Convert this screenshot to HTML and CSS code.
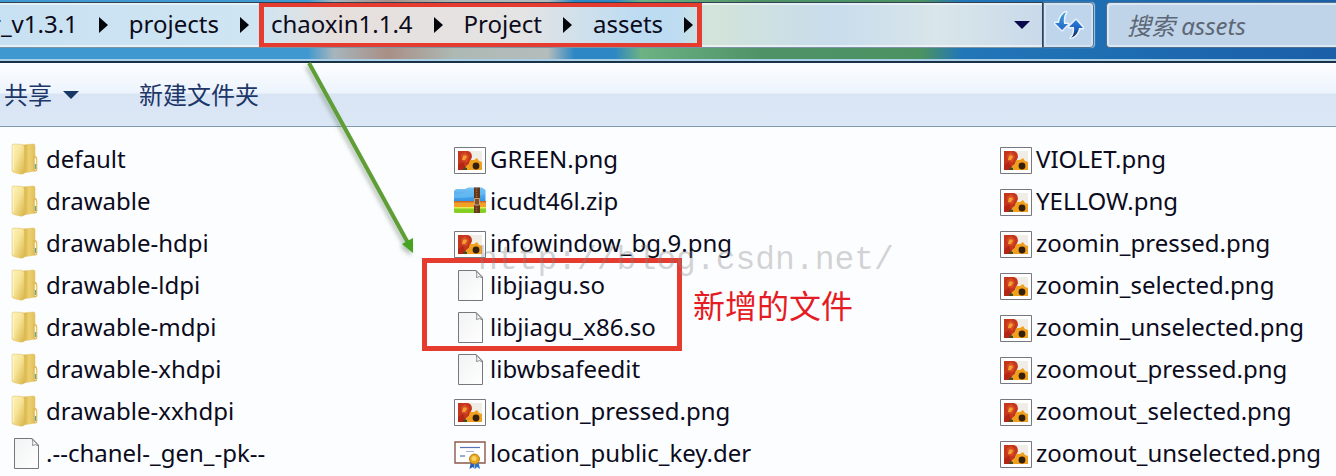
FILE: index.html
```html
<!DOCTYPE html>
<html lang="zh-CN">
<head>
<meta charset="utf-8">
<title>assets</title>
<link rel="stylesheet" href="styles.css">
</head>
<body>
<svg class="symbols" aria-hidden="true">
  <defs>
    <linearGradient id="foldL" x1="0" y1="0" x2="1" y2="1"><stop offset="0" stop-color="#fdf3bd"/><stop offset=".45" stop-color="#f6e497"/><stop offset="1" stop-color="#d9b447"/></linearGradient>
    <linearGradient id="foldR" x1="0" y1="0" x2="1" y2="0"><stop offset="0" stop-color="#d2ab3c"/><stop offset=".5" stop-color="#ecd070"/><stop offset="1" stop-color="#e3c05a"/></linearGradient>
    <linearGradient id="paper" x1="0" y1="0" x2="1" y2="1"><stop offset="0" stop-color="#f1f2f3"/><stop offset="1" stop-color="#ffffff"/></linearGradient>
    <linearGradient id="zipBlue" x1="0" y1="0" x2="0" y2="1"><stop offset="0" stop-color="#7cc6f6"/><stop offset="1" stop-color="#2a8de0"/></linearGradient>
    <linearGradient id="arrowLeft" x1="0" y1="0" x2="0" y2="1"><stop offset="0" stop-color="#3f9fd8"/><stop offset="1" stop-color="#2468c8"/></linearGradient>
    <linearGradient id="arrowRight" x1="0" y1="0" x2="0" y2="1"><stop offset="0" stop-color="#2b80dc"/><stop offset=".5" stop-color="#1f5fc0"/><stop offset="1" stop-color="#0a1840"/></linearGradient>
    <symbol id="folder" viewBox="0 0 32 32">
      <path d="M13 2 L23.500 1 Q25 1 25 3 V28 L13 30Z" fill="url(#foldR)" stroke="#dcbc5c" stroke-width=".5"/>
      <path d="M24 13 Q27 13 27 16 V27 Q27 28.500 24 28Z" fill="#e6c45c" stroke="#d0aa44" stroke-width=".5"/>
      <path d="M24.800 15 q1.400 0 1.400 2 v9 q-.6 1-1.400 1z" fill="#fffbe6"/>
      <path d="M24.800 21 h1.400 v5 h-1.400z" fill="#6fa08a"/>
      <path d="M2 2.500 Q2 1 4 1 L12 1.400 Q14.500 2 14.500 4.500 V30 Q13 31.500 10 31 L4 29.500 Q2 29 2 27.500Z" fill="url(#foldL)" stroke="#dcbc5c" stroke-width=".5"/>
      <path d="M3.300 3 V27" stroke="#fff9d8" stroke-width=".8"/>
    </symbol>
    <symbol id="file" viewBox="0 0 32 32">
      <path d="M4.500 1.500 H22 L28.500 8 V31.500 H4.500Z" fill="url(#paper)" stroke="#77777c"/>
      <path d="M22 1.500 Q23.500 5 22.500 8.500 Q25.500 6.500 28.500 9Z" fill="#fff" stroke="#808087" stroke-width=".9"/>
    </symbol>
    <symbol id="image" viewBox="0 0 32 32">
      <path d="M.5 4.500 H31.500 V30.500 H.5Z" fill="#fff" stroke="#77777f"/>
      <path d="M4 8 H28 V27 H4Z" fill="#efede6"/>
      <path d="M4 8 H14 Q18 9 18 14 L15 21 L9 27 H4Z" fill="#c5371d"/>
      <path d="M7 12 L11 9 L15 13 L13 19 L8 18Z" fill="#d94d22"/>
      <path d="M9 13 q3-2 4 1 l-2 3 h-3z" fill="#f2a035"/>
      <path d="M4 22 l5-3 3 8H4Z" fill="#b32515"/>
      <path d="M12 23 l3-2 1-4 4 0 3-2 2 3 3 1 V27 H12Z" fill="#f0a01c"/>
      <path d="M10 24 l3 1 v2 H9Z" fill="#3f5020"/>
      <circle cx="22" cy="23" r="3.400" fill="#35200c"/>
    </symbol>
    <symbol id="zip" viewBox="0 0 32 32">
      <path d="M0 6 Q1 4 3 4 H11 L14 2.500 H28 L31.500 5 V18 H0Z" fill="url(#zipBlue)"/>
      <path d="M0 9 Q10 10 18 4 H29 L31 7 V9 Q20 13 0 13Z" fill="#68bdf5" opacity=".7"/>
      <path d="M0 16 H32 V22 H0Z" fill="#f3a126"/><path d="M0 16 H32 V17.500 H0Z" fill="#c9682a"/>
      <path d="M0 22 H32 V27 Q32 28 30 28 H2 Q0 28 0 27Z" fill="#86cf22"/><path d="M0 22 H32 V23.500 H0Z" fill="#e5ec54"/>
      <path d="M20 2.500 H26 V28 H20Z" fill="#643719"/>
      <path d="M22.500 3 V13 M22.500 20 V28" stroke="#8d633f" stroke-width="1.400" stroke-dasharray="1.500 1"/>
      <path d="M20.500 13.500 H25.500 V20 H20.500Z" fill="#80502d" stroke="#c8a47c"/>
    </symbol>
    <symbol id="cert" viewBox="0 0 32 32">
      <path d="M1 5 H31 V26 H1Z" fill="#fff" stroke="#8c5a4d" stroke-width="1.400"/>
      <path d="M6 10.500 H26" stroke="#5671b5" stroke-width="1.200"/><path d="M12 14.500 H20" stroke="#a3b1d8"/><path d="M6 19 H11" stroke="#5671b5" stroke-width="1.200"/>
      <path d="M17 24 L15.500 32 L19 30 L20.500 32 V25Z" fill="#235fb5"/><path d="M21 25 V32 L23 30 L26 32 L24 23Z" fill="#2d73ca"/>
      <circle cx="20.500" cy="22" r="5" fill="#e6a61b" stroke="#bd8217"/><circle cx="20" cy="21.500" r="2.500" fill="#f7d066"/>
    </symbol>
  </defs>
</svg>

<div class="window">
  <header class="navbar">
    <nav class="address" aria-label="路径">
      <a class="crumb first" href="#">r_v1.3.1</a><i class="sep"></i>
      <a class="crumb" href="#">projects</a><i class="sep"></i>
      <span class="marked">
        <a class="crumb" href="#">chaoxin1.1.4</a><i class="sep"></i>
        <a class="crumb" href="#">Project</a><i class="sep"></i>
        <a class="crumb" href="#">assets</a><i class="sep"></i>
      </span>
      <button class="history" aria-label="历史"><i class="down"></i></button>
    </nav>
    <button class="refresh" aria-label="刷新">
      <svg viewBox="0 0 30 28" width="30" height="28">
        <g stroke="#e8f3fd" stroke-width="3" stroke-linejoin="round"><path d="M12 1 Q6 4 5 12 H1 L8 19 L14 13 H10 Q9 6 12 1Z"/><path d="M17 27 Q24 24 25 17 H29 L22 9 L15 16 H20 Q21 23 17 27Z"/></g>
        <path d="M12 1 Q6 4 5 12 H1 L8 19 L14 13 H10 Q9 6 12 1Z" fill="url(#arrowLeft)"/>
        <path d="M17 27 Q24 24 25 17 H29 L22 9 L15 16 H20 Q21 23 17 27Z" fill="url(#arrowRight)"/>
      </svg>
    </button>
    <input class="search" type="search" placeholder="搜索 assets" aria-label="搜索 assets">
  </header>

  <div class="toolbar">
    <button class="tool">共享<i class="down"></i></button>
    <button class="tool">新建文件夹</button>
  </div>

  <main class="files">
    <ul class="column">
      <li><svg><use href="#folder"/></svg>default</li>
      <li><svg><use href="#folder"/></svg>drawable</li>
      <li><svg><use href="#folder"/></svg>drawable-hdpi</li>
      <li><svg><use href="#folder"/></svg>drawable-ldpi</li>
      <li><svg><use href="#folder"/></svg>drawable-mdpi</li>
      <li><svg><use href="#folder"/></svg>drawable-xhdpi</li>
      <li><svg><use href="#folder"/></svg>drawable-xxhdpi</li>
      <li><svg><use href="#file"/></svg>.--chanel-_gen_-pk--</li>
    </ul>
    <ul class="column">
      <li><svg><use href="#image"/></svg>GREEN.png</li>
      <li><svg><use href="#zip"/></svg>icudt46l.zip</li>
      <li><svg><use href="#image"/></svg>infowindow_bg.9.png</li>
      <li><svg><use href="#file"/></svg>libjiagu.so</li>
      <li><svg><use href="#file"/></svg>libjiagu_x86.so</li>
      <li><svg><use href="#file"/></svg>libwbsafeedit</li>
      <li><svg><use href="#image"/></svg>location_pressed.png</li>
      <li><svg><use href="#cert"/></svg>location_public_key.der</li>
    </ul>
    <ul class="column">
      <li><svg><use href="#image"/></svg>VIOLET.png</li>
      <li><svg><use href="#image"/></svg>YELLOW.png</li>
      <li><svg><use href="#image"/></svg>zoomin_pressed.png</li>
      <li><svg><use href="#image"/></svg>zoomin_selected.png</li>
      <li><svg><use href="#image"/></svg>zoomin_unselected.png</li>
      <li><svg><use href="#image"/></svg>zoomout_pressed.png</li>
      <li><svg><use href="#image"/></svg>zoomout_selected.png</li>
      <li><svg><use href="#image"/></svg>zoomout_unselected.png</li>
    </ul>
  </main>

  <div class="box"></div>
  <span class="watermark">http://blog.csdn.net/</span>
  <strong class="note">新增的文件</strong>
  <svg class="arrow" viewBox="0 0 120 200" width="120" height="200" aria-hidden="true">
    <path d="M8 1 L107 181" stroke="#5f9e35" stroke-width="4"/>
    <path d="M101 182 L112 176 L112 191Z" fill="#45a321"/>
  </svg>
</div>
</body>
</html>
```
FILE: styles.css
```css
* { box-sizing: border-box; }
body {
  margin: 0;
  background: #fcfdff;
  color: #0b0b1c;
  font: 24px/42px "Noto Sans", "Noto Sans CJK SC", sans-serif;
  overflow: hidden;
}
button, input { font: inherit; color: inherit; border: 0; background: none; padding: 0; margin: 0; border-radius: 0; }
.symbols { position: absolute; width: 0; height: 0; }
.window { position: relative; min-height: 100vh; }

.navbar {
  display: flex;
  height: 63px;
  padding-top: 2px;
  align-items: flex-start;
  border-bottom: 2px solid #1b3148;
  box-shadow: inset 0 -2px #a9d0e6;
  background: linear-gradient(90deg, #3f98cf 0, #3f98cf 23%, #a7b5bc 25%, #a98f86 29%, #adb9b4 34%, #b4bcbc 41%, #2c87c4 43%, #2c87c4 46%, #6cb283 48%, #4f9266 57%, #4b9262 69%, #2176b8 72%, #1a5fa8 100%);
}
.address {
  flex: 1;
  min-width: 0;
  height: 46px;
  display: flex;
  align-items: center;
  overflow: hidden;
  border: 1px solid #2d4355;
  border-left: 0;
  border-bottom-color: #7c94a3;
  box-shadow: inset 0 -2px rgba(255, 255, 255, .5), inset 0 2px rgba(255, 255, 255, .5);
  background: linear-gradient(90deg, #c8e1f2 0, #cfe5f2 25%, #e6dfdc 32%, #e4e4e4 50%, #bddcf2 61%, #bddcf2 65%, #d3e4d9 68%, #c8dcec 80%, #d9e6ea 90%, #c9d9ea 100%);
}
.crumb { color: inherit; text-decoration: none; line-height: 36px; padding-bottom: 2px; }
.first { margin-left: -9px; }
.sep {
  flex: none;
  margin: 0 21px;
  border: solid transparent;
  border-width: 8px 0 8px 9px;
  border-left-color: #05050c;
}
.sep:has(+ .marked) { margin-right: 10px; }
.marked {
  flex: none;
  display: flex;
  align-items: center;
  height: 46px;
  padding-left: 7px;
  border: 5px solid #e63c30;
}
.marked .sep:last-child { margin-right: 4px; }
.down {
  display: inline-block;
  border: solid transparent;
  border-width: 8px 8px 0;
  border-top-color: #08084a;
}
.history { margin-left: auto; padding: 0 12px; line-height: 36px; display: flex; }
.refresh {
  display: flex;
  align-items: center;
  justify-content: center;
  width: 51px;
  height: 46px;
  border: 1px solid #4f718f;
  border-radius: 0 4px 4px 0;
  background: #bfd5eb;
  box-shadow: inset 0 0 0 2px #d3e3f2, 1px 0 1px #a9c8e4;
}
.search {
  width: 230px;
  height: 46px;
  margin-left: 12px;
  padding-left: 20px;
  border: 1px solid #4f718f;
  border-right: 0;
  border-radius: 4px 0 0 4px;
  background: #c0d4e9;
  box-shadow: inset 2px 2px #dce8f4, inset 0 -2px #dce8f4;
}
.search::placeholder { color: #5c6775; font-style: italic; opacity: 1; }

.toolbar {
  display: flex;
  gap: 60px;
  height: 64px;
  padding-left: 4px;
  color: #1c3768;
  border-bottom: 1px solid #8099b0;
  background: linear-gradient(#fcfdff, #edf4fd 30px, #d9e5f4 31px, #dce7f6);
}
.tool { display: flex; align-items: center; gap: 11px; }
.tool .down { border-top-color: #173867; }

.files {
  display: grid;
  grid-template-columns: 444fr 546fr 336fr;
  padding: 11px 0 1px 10px;
}
.column { list-style: none; margin: 0; padding: 0; min-width: 0; }
.column li { display: flex; align-items: center; gap: 4px; white-space: nowrap; }
.column svg { flex: none; width: 32px; height: 32px; }

.box {
  position: absolute;
  left: 422px;
  top: 258px;
  width: 260px;
  height: 93px;
  border: 5px solid #e63c30;
}
.watermark {
  position: absolute;
  left: 478px;
  top: 240px;
  font-family: "Liberation Mono", monospace;
  font-size: 33px;
  color: rgba(130, 130, 135, .35);
}
.note {
  position: absolute;
  left: 693px;
  top: 285px;
  font-size: 32px;
  font-weight: 400;
  color: #e51c23;
}
.arrow {
  position: absolute;
  left: 301px;
  top: 62px;
  filter: drop-shadow(-2px 3px 2px rgba(70, 100, 70, .4));
}
```
